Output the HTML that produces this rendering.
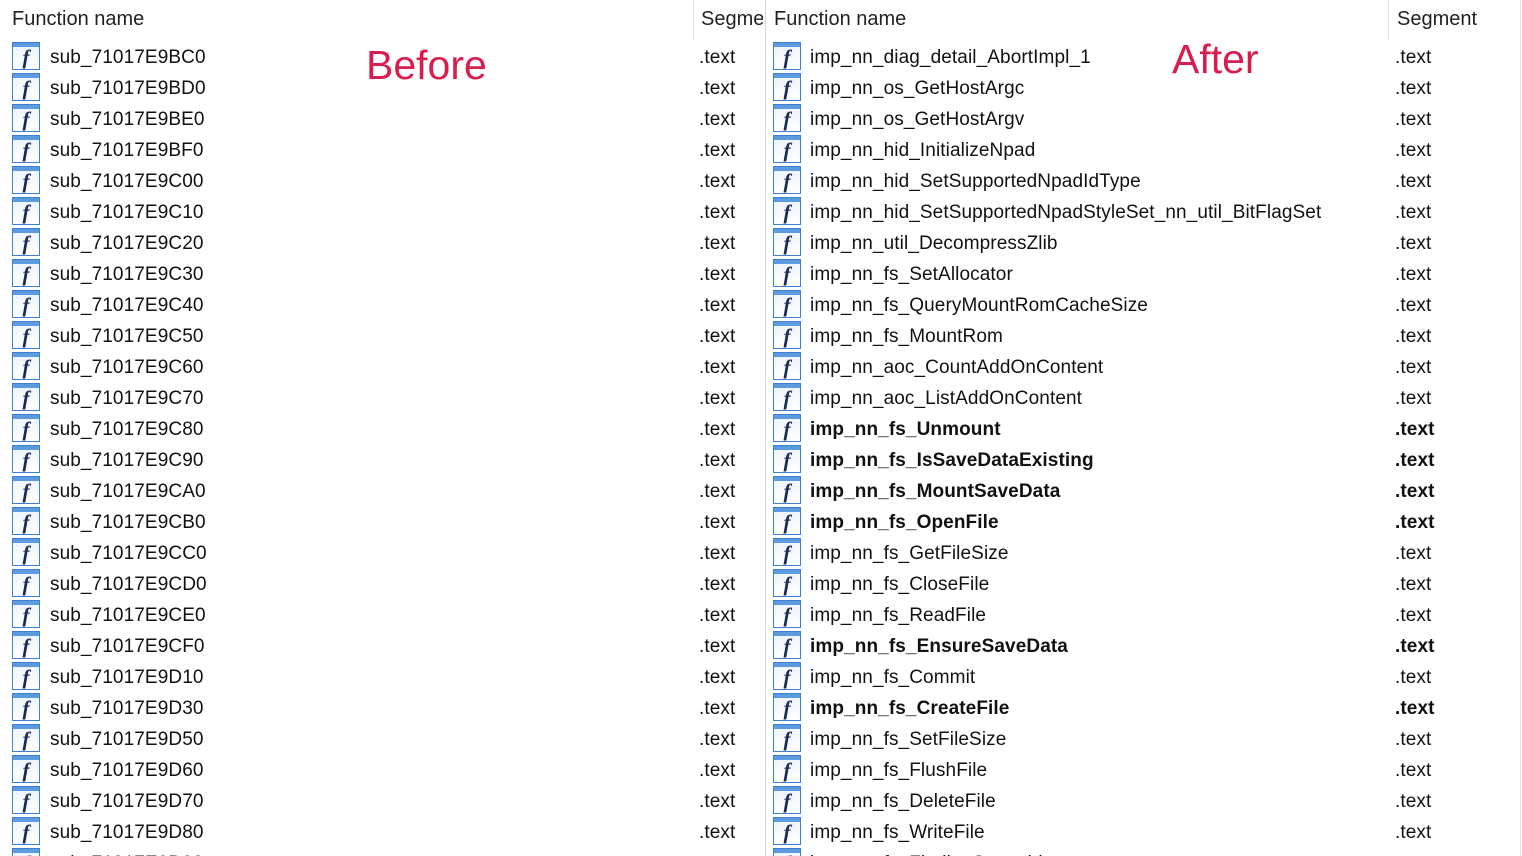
<!DOCTYPE html>
<html style="width:1522px;height:856px;overflow:hidden"><head><meta charset="utf-8"><style>
*{margin:0;padding:0;box-sizing:border-box}
body{width:1522px;height:856px;overflow:hidden;background:#fff;font-family:"Liberation Sans","DejaVu Sans",sans-serif;color:#111;position:relative}
.h{position:absolute;top:8px;font-size:20px;color:#222;letter-spacing:0}
.vl{position:absolute;top:0;width:1px;background:#e2e2e2}
.r{position:absolute;height:31px;line-height:31px;font-size:19px;letter-spacing:0.1px;white-space:nowrap}
.ic{position:absolute;width:28px;height:28px;border:1.5px solid #3f7fcf;background:linear-gradient(#5d9be0 0,#5d9be0 4px,#eef5fd 4px,#fff 100%);top:0px}
.ic::after{content:"f";position:absolute;left:0;right:0;top:1px;text-align:center;font:italic 21px/26px "Liberation Serif",serif;color:#1a2a55;font-weight:bold}
.b{font-weight:bold}
.lbl{position:absolute;color:#d81e4e;font-size:41px}
</style></head><body>
<div class="h" style="left:12px">Function name</div>
<div class="h" style="left:701px;width:62px;overflow:hidden">Segment</div>
<div class="h" style="left:774px">Function name</div>
<div class="h" style="left:1397px">Segment</div>
<div class="vl" style="left:693px;height:40px"></div>
<div class="vl" style="left:765px;height:856px;background:#d8d8d8"></div>
<div class="vl" style="left:1388px;height:40px"></div>
<div class="vl" style="left:1520px;height:856px"></div>
<div class="lbl" style="left:366px;top:42px">Before</div>
<div class="lbl" style="left:1172px;top:36px">After</div>

<div style="position:absolute;left:0;top:42px;width:765px">
<div class="r" style="top:0"><div class="ic" style="left:12px"></div><span style="position:absolute;left:50px">sub_71017E9BC0</span><span style="position:absolute;left:699px">.text</span></div>
<div class="r" style="top:31px"><div class="ic" style="left:12px"></div><span style="position:absolute;left:50px">sub_71017E9BD0</span><span style="position:absolute;left:699px">.text</span></div>
<div class="r" style="top:62px"><div class="ic" style="left:12px"></div><span style="position:absolute;left:50px">sub_71017E9BE0</span><span style="position:absolute;left:699px">.text</span></div>
<div class="r" style="top:93px"><div class="ic" style="left:12px"></div><span style="position:absolute;left:50px">sub_71017E9BF0</span><span style="position:absolute;left:699px">.text</span></div>
<div class="r" style="top:124px"><div class="ic" style="left:12px"></div><span style="position:absolute;left:50px">sub_71017E9C00</span><span style="position:absolute;left:699px">.text</span></div>
<div class="r" style="top:155px"><div class="ic" style="left:12px"></div><span style="position:absolute;left:50px">sub_71017E9C10</span><span style="position:absolute;left:699px">.text</span></div>
<div class="r" style="top:186px"><div class="ic" style="left:12px"></div><span style="position:absolute;left:50px">sub_71017E9C20</span><span style="position:absolute;left:699px">.text</span></div>
<div class="r" style="top:217px"><div class="ic" style="left:12px"></div><span style="position:absolute;left:50px">sub_71017E9C30</span><span style="position:absolute;left:699px">.text</span></div>
<div class="r" style="top:248px"><div class="ic" style="left:12px"></div><span style="position:absolute;left:50px">sub_71017E9C40</span><span style="position:absolute;left:699px">.text</span></div>
<div class="r" style="top:279px"><div class="ic" style="left:12px"></div><span style="position:absolute;left:50px">sub_71017E9C50</span><span style="position:absolute;left:699px">.text</span></div>
<div class="r" style="top:310px"><div class="ic" style="left:12px"></div><span style="position:absolute;left:50px">sub_71017E9C60</span><span style="position:absolute;left:699px">.text</span></div>
<div class="r" style="top:341px"><div class="ic" style="left:12px"></div><span style="position:absolute;left:50px">sub_71017E9C70</span><span style="position:absolute;left:699px">.text</span></div>
<div class="r" style="top:372px"><div class="ic" style="left:12px"></div><span style="position:absolute;left:50px">sub_71017E9C80</span><span style="position:absolute;left:699px">.text</span></div>
<div class="r" style="top:403px"><div class="ic" style="left:12px"></div><span style="position:absolute;left:50px">sub_71017E9C90</span><span style="position:absolute;left:699px">.text</span></div>
<div class="r" style="top:434px"><div class="ic" style="left:12px"></div><span style="position:absolute;left:50px">sub_71017E9CA0</span><span style="position:absolute;left:699px">.text</span></div>
<div class="r" style="top:465px"><div class="ic" style="left:12px"></div><span style="position:absolute;left:50px">sub_71017E9CB0</span><span style="position:absolute;left:699px">.text</span></div>
<div class="r" style="top:496px"><div class="ic" style="left:12px"></div><span style="position:absolute;left:50px">sub_71017E9CC0</span><span style="position:absolute;left:699px">.text</span></div>
<div class="r" style="top:527px"><div class="ic" style="left:12px"></div><span style="position:absolute;left:50px">sub_71017E9CD0</span><span style="position:absolute;left:699px">.text</span></div>
<div class="r" style="top:558px"><div class="ic" style="left:12px"></div><span style="position:absolute;left:50px">sub_71017E9CE0</span><span style="position:absolute;left:699px">.text</span></div>
<div class="r" style="top:589px"><div class="ic" style="left:12px"></div><span style="position:absolute;left:50px">sub_71017E9CF0</span><span style="position:absolute;left:699px">.text</span></div>
<div class="r" style="top:620px"><div class="ic" style="left:12px"></div><span style="position:absolute;left:50px">sub_71017E9D10</span><span style="position:absolute;left:699px">.text</span></div>
<div class="r" style="top:651px"><div class="ic" style="left:12px"></div><span style="position:absolute;left:50px">sub_71017E9D30</span><span style="position:absolute;left:699px">.text</span></div>
<div class="r" style="top:682px"><div class="ic" style="left:12px"></div><span style="position:absolute;left:50px">sub_71017E9D50</span><span style="position:absolute;left:699px">.text</span></div>
<div class="r" style="top:713px"><div class="ic" style="left:12px"></div><span style="position:absolute;left:50px">sub_71017E9D60</span><span style="position:absolute;left:699px">.text</span></div>
<div class="r" style="top:744px"><div class="ic" style="left:12px"></div><span style="position:absolute;left:50px">sub_71017E9D70</span><span style="position:absolute;left:699px">.text</span></div>
<div class="r" style="top:775px"><div class="ic" style="left:12px"></div><span style="position:absolute;left:50px">sub_71017E9D80</span><span style="position:absolute;left:699px">.text</span></div>
<div class="r" style="top:806px"><div class="ic" style="left:12px"></div><span style="position:absolute;left:50px">sub_71017E9D90</span><span style="position:absolute;left:699px">.text</span></div>
</div>

<div style="position:absolute;left:0;top:42px;width:1522px">
<div class="r" style="top:0"><div class="ic" style="left:773px"></div><span style="position:absolute;left:810px">imp_nn_diag_detail_AbortImpl_1</span><span style="position:absolute;left:1395px">.text</span></div>
<div class="r" style="top:31px"><div class="ic" style="left:773px"></div><span style="position:absolute;left:810px">imp_nn_os_GetHostArgc</span><span style="position:absolute;left:1395px">.text</span></div>
<div class="r" style="top:62px"><div class="ic" style="left:773px"></div><span style="position:absolute;left:810px">imp_nn_os_GetHostArgv</span><span style="position:absolute;left:1395px">.text</span></div>
<div class="r" style="top:93px"><div class="ic" style="left:773px"></div><span style="position:absolute;left:810px">imp_nn_hid_InitializeNpad</span><span style="position:absolute;left:1395px">.text</span></div>
<div class="r" style="top:124px"><div class="ic" style="left:773px"></div><span style="position:absolute;left:810px">imp_nn_hid_SetSupportedNpadIdType</span><span style="position:absolute;left:1395px">.text</span></div>
<div class="r" style="top:155px"><div class="ic" style="left:773px"></div><span style="position:absolute;left:810px">imp_nn_hid_SetSupportedNpadStyleSet_nn_util_BitFlagSet</span><span style="position:absolute;left:1395px">.text</span></div>
<div class="r" style="top:186px"><div class="ic" style="left:773px"></div><span style="position:absolute;left:810px">imp_nn_util_DecompressZlib</span><span style="position:absolute;left:1395px">.text</span></div>
<div class="r" style="top:217px"><div class="ic" style="left:773px"></div><span style="position:absolute;left:810px">imp_nn_fs_SetAllocator</span><span style="position:absolute;left:1395px">.text</span></div>
<div class="r" style="top:248px"><div class="ic" style="left:773px"></div><span style="position:absolute;left:810px">imp_nn_fs_QueryMountRomCacheSize</span><span style="position:absolute;left:1395px">.text</span></div>
<div class="r" style="top:279px"><div class="ic" style="left:773px"></div><span style="position:absolute;left:810px">imp_nn_fs_MountRom</span><span style="position:absolute;left:1395px">.text</span></div>
<div class="r" style="top:310px"><div class="ic" style="left:773px"></div><span style="position:absolute;left:810px">imp_nn_aoc_CountAddOnContent</span><span style="position:absolute;left:1395px">.text</span></div>
<div class="r" style="top:341px"><div class="ic" style="left:773px"></div><span style="position:absolute;left:810px">imp_nn_aoc_ListAddOnContent</span><span style="position:absolute;left:1395px">.text</span></div>
<div class="r b" style="top:372px"><div class="ic" style="left:773px"></div><span style="position:absolute;left:810px">imp_nn_fs_Unmount</span><span style="position:absolute;left:1395px">.text</span></div>
<div class="r b" style="top:403px"><div class="ic" style="left:773px"></div><span style="position:absolute;left:810px">imp_nn_fs_IsSaveDataExisting</span><span style="position:absolute;left:1395px">.text</span></div>
<div class="r b" style="top:434px"><div class="ic" style="left:773px"></div><span style="position:absolute;left:810px">imp_nn_fs_MountSaveData</span><span style="position:absolute;left:1395px">.text</span></div>
<div class="r b" style="top:465px"><div class="ic" style="left:773px"></div><span style="position:absolute;left:810px">imp_nn_fs_OpenFile</span><span style="position:absolute;left:1395px">.text</span></div>
<div class="r" style="top:496px"><div class="ic" style="left:773px"></div><span style="position:absolute;left:810px">imp_nn_fs_GetFileSize</span><span style="position:absolute;left:1395px">.text</span></div>
<div class="r" style="top:527px"><div class="ic" style="left:773px"></div><span style="position:absolute;left:810px">imp_nn_fs_CloseFile</span><span style="position:absolute;left:1395px">.text</span></div>
<div class="r" style="top:558px"><div class="ic" style="left:773px"></div><span style="position:absolute;left:810px">imp_nn_fs_ReadFile</span><span style="position:absolute;left:1395px">.text</span></div>
<div class="r b" style="top:589px"><div class="ic" style="left:773px"></div><span style="position:absolute;left:810px">imp_nn_fs_EnsureSaveData</span><span style="position:absolute;left:1395px">.text</span></div>
<div class="r" style="top:620px"><div class="ic" style="left:773px"></div><span style="position:absolute;left:810px">imp_nn_fs_Commit</span><span style="position:absolute;left:1395px">.text</span></div>
<div class="r b" style="top:651px"><div class="ic" style="left:773px"></div><span style="position:absolute;left:810px">imp_nn_fs_CreateFile</span><span style="position:absolute;left:1395px">.text</span></div>
<div class="r" style="top:682px"><div class="ic" style="left:773px"></div><span style="position:absolute;left:810px">imp_nn_fs_SetFileSize</span><span style="position:absolute;left:1395px">.text</span></div>
<div class="r" style="top:713px"><div class="ic" style="left:773px"></div><span style="position:absolute;left:810px">imp_nn_fs_FlushFile</span><span style="position:absolute;left:1395px">.text</span></div>
<div class="r" style="top:744px"><div class="ic" style="left:773px"></div><span style="position:absolute;left:810px">imp_nn_fs_DeleteFile</span><span style="position:absolute;left:1395px">.text</span></div>
<div class="r" style="top:775px"><div class="ic" style="left:773px"></div><span style="position:absolute;left:810px">imp_nn_fs_WriteFile</span><span style="position:absolute;left:1395px">.text</span></div>
<div class="r" style="top:806px"><div class="ic" style="left:773px"></div><span style="position:absolute;left:810px">imp_nn_fs_FindingSomething</span><span style="position:absolute;left:1395px">.text</span></div>
</div>
</body></html>
